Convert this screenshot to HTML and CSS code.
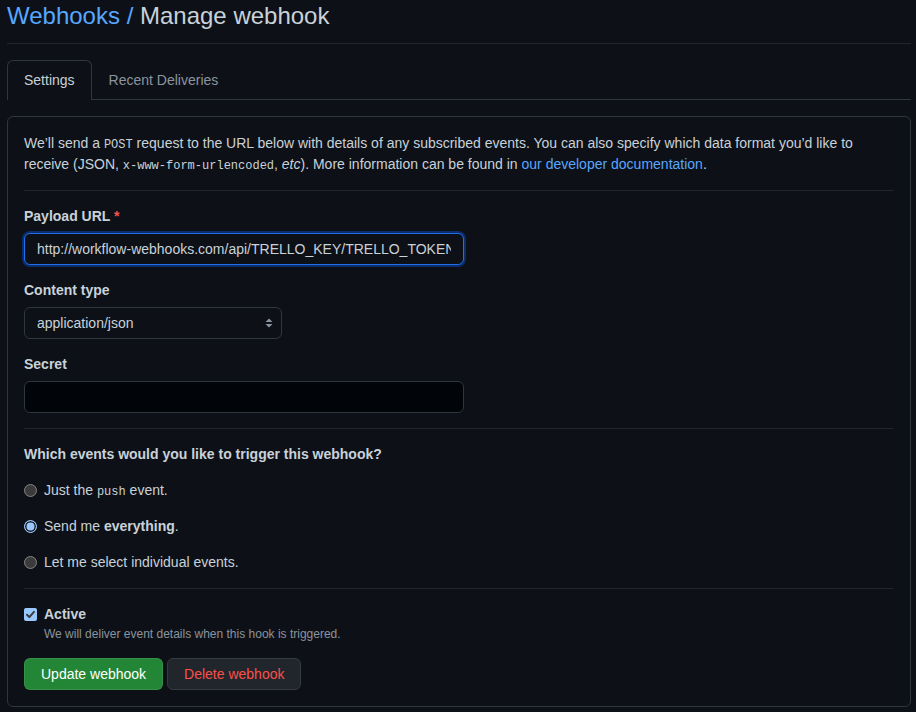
FILE: index.html
```html
<!DOCTYPE html>
<html lang="en">
<head>
<meta charset="utf-8">
<title>Manage webhook</title>
<link rel="stylesheet" href="styles.css">
</head>
<body>
<div class="page">
  <div class="subhead">
    <h1 class="subhead-title"><a class="crumb" href="#">Webhooks</a><span class="crumb-sep"> / </span>Manage webhook</h1>
  </div>

  <nav class="tabnav">
    <a class="tab tab-selected" href="#">Settings</a>
    <a class="tab" href="#">Recent Deliveries</a>
  </nav>

  <form class="box">
    <p class="intro">We’ll send a <code>POST</code> request to the URL below with details of any subscribed events. You can also specify which data format you’d like to receive (JSON, <code>x-www-form-urlencoded</code>, <em>etc</em>). More information can be found in <a class="link" href="#">our developer documentation</a>.</p>

    <hr class="divider">

    <div class="field">
      <label class="label">Payload URL <span class="req">*</span></label>
      <input class="input input-wide input-focus" type="text" value="http://workflow-webhooks.com/api/TRELLO_KEY/TRELLO_TOKEN">
    </div>

    <div class="field">
      <label class="label">Content type</label>
      <div class="select-wrap">
        <select class="select">
          <option>application/json</option>
          <option>application/x-www-form-urlencoded</option>
        </select>
        <svg class="select-caret" width="8" height="12" viewBox="0 0 8 12" aria-hidden="true"><path d="M4 1.5L7.5 5h-7z M4 10.5L0.5 7h7z" fill="#8b949e"/></svg>
      </div>
    </div>

    <div class="field">
      <label class="label">Secret</label>
      <input class="input input-wide input-dark" type="password" value="">
    </div>

    <hr class="divider">

    <p class="question">Which events would you like to trigger this webhook?</p>

    <label class="choice"><input class="radio" type="radio" name="ev"><span>Just the <code>push</code> event.</span></label>
    <label class="choice"><input class="radio" type="radio" name="ev" checked><span>Send me <strong>everything</strong>.</span></label>
    <label class="choice"><input class="radio" type="radio" name="ev"><span>Let me select individual events.</span></label>

    <hr class="divider">

    <label class="choice choice-check">
      <span class="check-wrap">
        <input class="checkbox" type="checkbox" checked>
        <svg class="check-mark" width="13" height="13" viewBox="0 0 13 13" aria-hidden="true"><path d="M3 6.8L5.3 9.1L10 3.9" fill="none" stroke="#3b3b3b" stroke-width="2" stroke-linecap="round" stroke-linejoin="round"/></svg>
      </span>
      <strong>Active</strong>
    </label>
    <p class="note">We will deliver event details when this hook is triggered.</p>

    <div class="actions">
      <button type="button" class="btn btn-primary">Update webhook</button>
      <button type="button" class="btn btn-danger">Delete webhook</button>
    </div>
  </form>
</div>
</body>
</html>
```

FILE: styles.css
```css
:root {
  color-scheme: dark;
}

* {
  box-sizing: border-box;
}

body {
  margin: 0;
  background: #0d1117;
  color: #c9d1d9;
  font-family: "Liberation Sans", Arial, sans-serif;
  font-size: 14px;
  line-height: 21px;
}

.page {
  margin-left: 7px;
  width: 904px;
}

.subhead {
  padding: 1px 0 12px;
  border-bottom: 1px solid #21262d;
  margin-bottom: 16px;
}

.subhead-title {
  margin: 0;
  font-size: 24px;
  font-weight: 400;
  line-height: 30px;
  color: #c9d1d9;
}

.crumb,
.crumb-sep {
  color: #58a6ff;
  text-decoration: none;
}

.tabnav {
  display: flex;
  border-bottom: 1px solid #30363d;
  margin-bottom: 16px;
}

.tab {
  display: block;
  padding: 9px 16px 8px;
  border: 1px solid transparent;
  border-bottom: 0;
  border-radius: 6px 6px 0 0;
  color: #8b949e;
  text-decoration: none;
  line-height: 21px;
}

.tab-selected {
  color: #c9d1d9;
  border-color: #30363d;
  background: #0d1117;
  margin-bottom: -1px;
  padding-bottom: 9px;
}

.box {
  display: block;
  border: 1px solid #30363d;
  border-radius: 6px;
  padding: 16px;
  margin: 0;
}

.intro {
  margin: 0;
}

code {
  font-family: "Liberation Mono", monospace;
  font-size: 12px;
  line-height: 1;
}

.link {
  color: #58a6ff;
  text-decoration: none;
}

.divider {
  margin: 15px 0;
  height: 0;
  border: 0;
  border-bottom: 1px solid #21262d;
}

.field {
  display: flex;
  flex-direction: column;
  align-items: flex-start;
  margin-bottom: 15px;
}

.field:last-of-type {
  margin-bottom: 0;
}

.label {
  font-weight: 700;
  margin-bottom: 6px;
}

.req {
  color: #f85149;
}

.input,
.select {
  height: 32px;
  padding: 5px 12px;
  font-family: "Liberation Sans", Arial, sans-serif;
  font-size: 14px;
  line-height: 20px;
  color: #c9d1d9;
  background: #0d1117;
  border: 1px solid #30363d;
  border-radius: 6px;
  outline: none;
}

.input-wide {
  width: 440px;
}

.input-focus {
  border-color: #1f6feb;
  box-shadow: 0 0 0 2px #0c2d6b;
}

.input-dark {
  background: #010409;
}

.select-wrap {
  position: relative;
  width: 258px;
}

.select {
  width: 258px;
  appearance: none;
  -webkit-appearance: none;
  padding-right: 28px;
}

.select-caret {
  position: absolute;
  right: 9px;
  top: 10px;
  pointer-events: none;
}

.question {
  margin: 0;
  font-weight: 700;
}

.choice {
  display: flex;
  align-items: center;
  gap: 7px;
  margin: 15px 0;
}

.radio {
  appearance: none;
  -webkit-appearance: none;
  flex: none;
  width: 13px;
  height: 13px;
  margin: 0;
  border-radius: 50%;
  border: 1px solid #858585;
  background: #3b3b3b;
}

.radio:checked {
  border: 1.5px solid #99c8ff;
  background: #99c8ff;
  box-shadow: inset 0 0 0 1.5px #1b1b1b;
}

.check-wrap {
  position: relative;
  flex: none;
  width: 13px;
  height: 13px;
}

.checkbox {
  appearance: none;
  -webkit-appearance: none;
  display: block;
  width: 13px;
  height: 13px;
  margin: 0;
  border-radius: 2px;
  background: #99c8ff;
  border: 0;
}

.check-mark {
  position: absolute;
  left: 0;
  top: 0;
  pointer-events: none;
}

.choice-check {
  margin: 0;
}

.note {
  margin: 0 0 0 20px;
  font-size: 12px;
  line-height: 18px;
  color: #8b949e;
}

.actions {
  display: flex;
  gap: 4px;
  margin-top: 15px;
}

.btn {
  height: 32px;
  padding: 5px 16px;
  font-family: "Liberation Sans", Arial, sans-serif;
  font-size: 14px;
  line-height: 20px;
  border-radius: 6px;
  border: 1px solid rgba(240, 246, 252, 0.1);
  cursor: pointer;
}

.btn-primary {
  background: #238636;
  color: #ffffff;
}

.btn-danger {
  background: #21262d;
  color: #f85149;
  border-color: #363b42;
}
```
